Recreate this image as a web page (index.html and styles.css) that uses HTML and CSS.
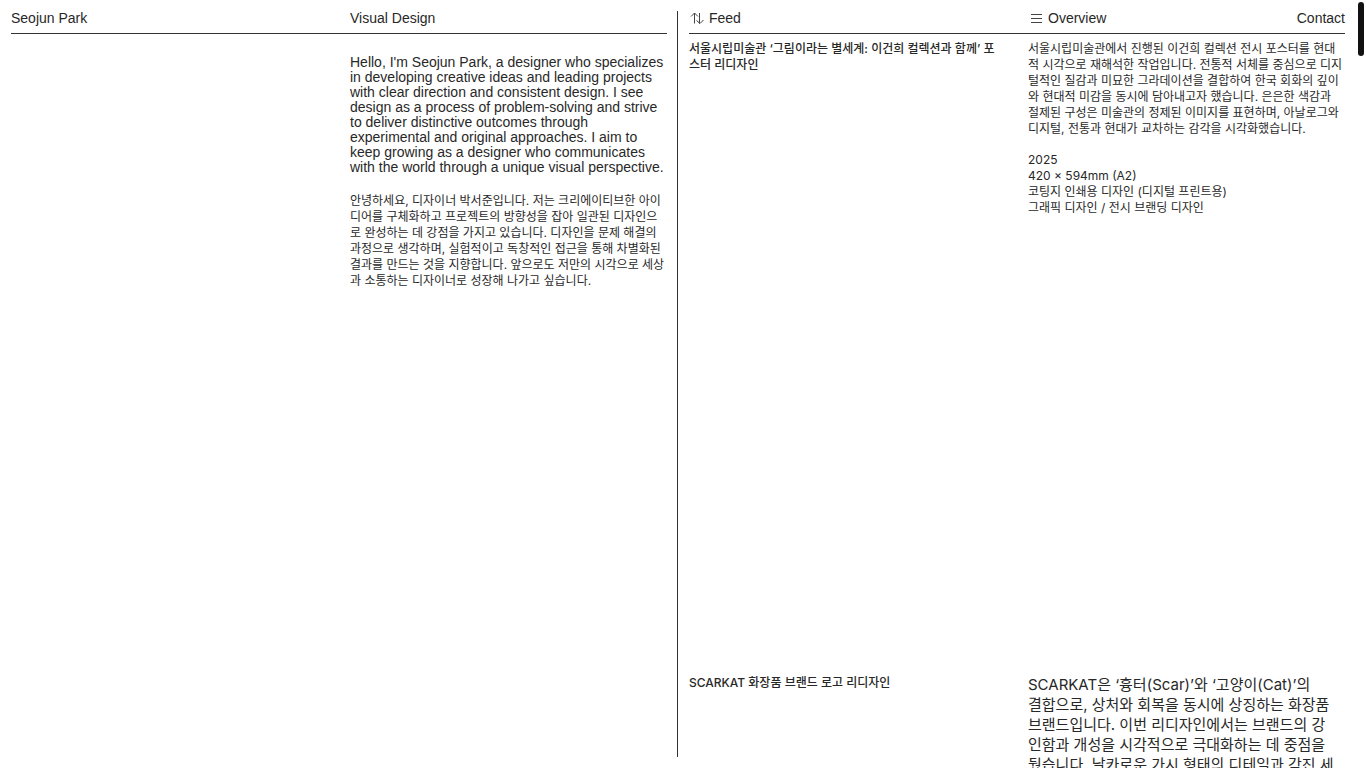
FILE: index.html
```html
<!DOCTYPE html>
<html lang="ko">

<head>
  <meta charset="utf-8">
  <meta name="viewport" content="width=device-width, initial-scale=1.0">
  <title>Seojun Park</title>
  <link rel="stylesheet" href="styles.css">
</head>

<body>
  <div class="page">
    <section class="pane">
      <header class="bar columns">
        <a href="#">Seojun Park</a>
        <span>Visual Design</span>
      </header>
      <div class="columns">
        <div class="about">
          <p class="about-en" lang="en">Hello, I'm Seojun Park, a designer who specializes in developing creative ideas and leading projects with clear direction and consistent design. I see design as a process of problem-solving and strive to deliver distinctive outcomes through experimental and original approaches. I aim to keep growing as a designer who communicates with the world through a unique visual perspective.</p>
          <p class="text">안녕하세요, 디자이너 박서준입니다. 저는 크리에이티브한 아이디어를 구체화하고 프로젝트의 방향성을 잡아 일관된 디자인으로 완성하는 데 강점을 가지고 있습니다. 디자인을 문제 해결의 과정으로 생각하며, 실험적이고 독창적인 접근을 통해 차별화된 결과를 만드는 것을 지향합니다. 앞으로도 저만의 시각으로 세상과 소통하는 디자이너로 성장해 나가고 싶습니다.</p>
        </div>
      </div>
    </section>

    <main class="pane feed">
      <nav class="bar columns">
        <a href="#feed" class="nav-link">
          <svg class="icon" viewBox="0 0 16 16" aria-hidden="true">
            <path d="M2 5.5 5.5 2 9 5.5M5.5 2V12.5M7.5 9.5 11 12.5 14.5 9M10.5 2V12.5" />
          </svg>
          Feed
        </a>
        <div class="nav-right">
          <a href="#overview" class="nav-link">
            <svg class="icon" viewBox="0 0 16 16" aria-hidden="true">
              <path d="M3 3.5H14M3 7.5H14M3 11.5H14" />
            </svg>
            Overview
          </a>
          <a href="#contact">Contact</a>
        </div>
      </nav>

      <article class="project columns">
        <h2 class="project-title">서울시립미술관 ‘그림이라는 별세계: 이건희 컬렉션과 함께’ 포<br>스터 리디자인</h2>
        <div class="text">
          <p>서울시립미술관에서 진행된 이건희 컬렉션 전시 포스터를 현대<br>적 시각으로 재해석한 작업입니다. 전통적 서체를 중심으로 디지<br>털적인 질감과 미묘한 그라데이션을 결합하여 한국 회화의 깊이<br>와 현대적 미감을 동시에 담아내고자 했습니다. 은은한 색감과<br>절제된 구성은 미술관의 정제된 이미지를 표현하며, 아날로그와<br>디지털, 전통과 현대가 교차하는 감각을 시각화했습니다.</p>
          <p>2025<br>420 × 594mm (A2)<br>코팅지 인쇄용 디자인 (디지털 프린트용)<br>그래픽 디자인 / 전시 브랜딩 디자인</p>
        </div>
      </article>

      <article class="project columns">
        <h2 class="project-title">SCARKAT 화장품 브랜드 로고 리디자인</h2>
        <div class="text text-large">
          <p>SCARKAT은 ‘흉터(Scar)’와 ‘고양이(Cat)’의<br>결합으로, 상처와 회복을 동시에 상징하는 화장품<br>브랜드입니다. 이번 리디자인에서는 브랜드의 강<br>인함과 개성을 시각적으로 극대화하는 데 중점을<br>뒀습니다. 날카로운 가시 형태의 디테일과 각진 세</p>
        </div>
      </article>
    </main>
  </div>
  <div class="scroll-thumb"></div>
</body>

</html>
```

FILE: styles.css
```css
* {
  margin: 0;
  padding: 0;
}

body {
  height: 100vh;
  overflow: hidden;
  background: #fff;
  color: #282828;
  font-family: "Liberation Sans", Arial, "Noto Sans CJK KR", sans-serif;
  font-size: 14px;
  line-height: 15px;
}

a {
  color: inherit;
  text-decoration: none;
}

.page {
  display: flex;
  gap: 10px;
  height: calc(100vh - 22px);
  padding: 11px 21px 11px 11px;
}

.pane {
  flex: 1 1 0;
  min-width: 0;
}

.feed {
  padding-left: 11px;
  border-left: 1px solid #333;
}

.columns {
  display: grid;
  grid-template-columns: minmax(0, 1fr) minmax(0, 1fr);
  column-gap: 22px;
}

/* Top bars */
.bar {
  height: 22px;
  margin-bottom: 7px;
  border-bottom: 1px solid #333;
}

.nav-link {
  display: flex;
  gap: 4px;
}

.nav-right {
  display: flex;
  justify-content: space-between;
}

.icon {
  width: 16px;
  height: 16px;
  fill: none;
  stroke: #444;
  stroke-width: 1;
}

/* Intro */
.about {
  grid-column: 2;
  padding-top: 14px;
}

.about-en {
  margin-bottom: 18px;
}

/* Projects */
.text,
.project-title {
  font-family: Inter, "Noto Sans CJK KR", sans-serif;
  font-size: 12px;
  font-weight: 400;
  line-height: 16px;
}

.project {
  min-height: 634px;
}

.project-title {
  font-weight: 500;
}

.project p + p {
  margin-top: 15px;
}

.text-large {
  font-size: 15px;
  line-height: 20px;
}

/* Page scroll position */
.scroll-thumb {
  position: fixed;
  top: 2px;
  right: 2px;
  width: 6px;
  height: 54px;
  border-radius: 3px;
  background: #111;
}
```
